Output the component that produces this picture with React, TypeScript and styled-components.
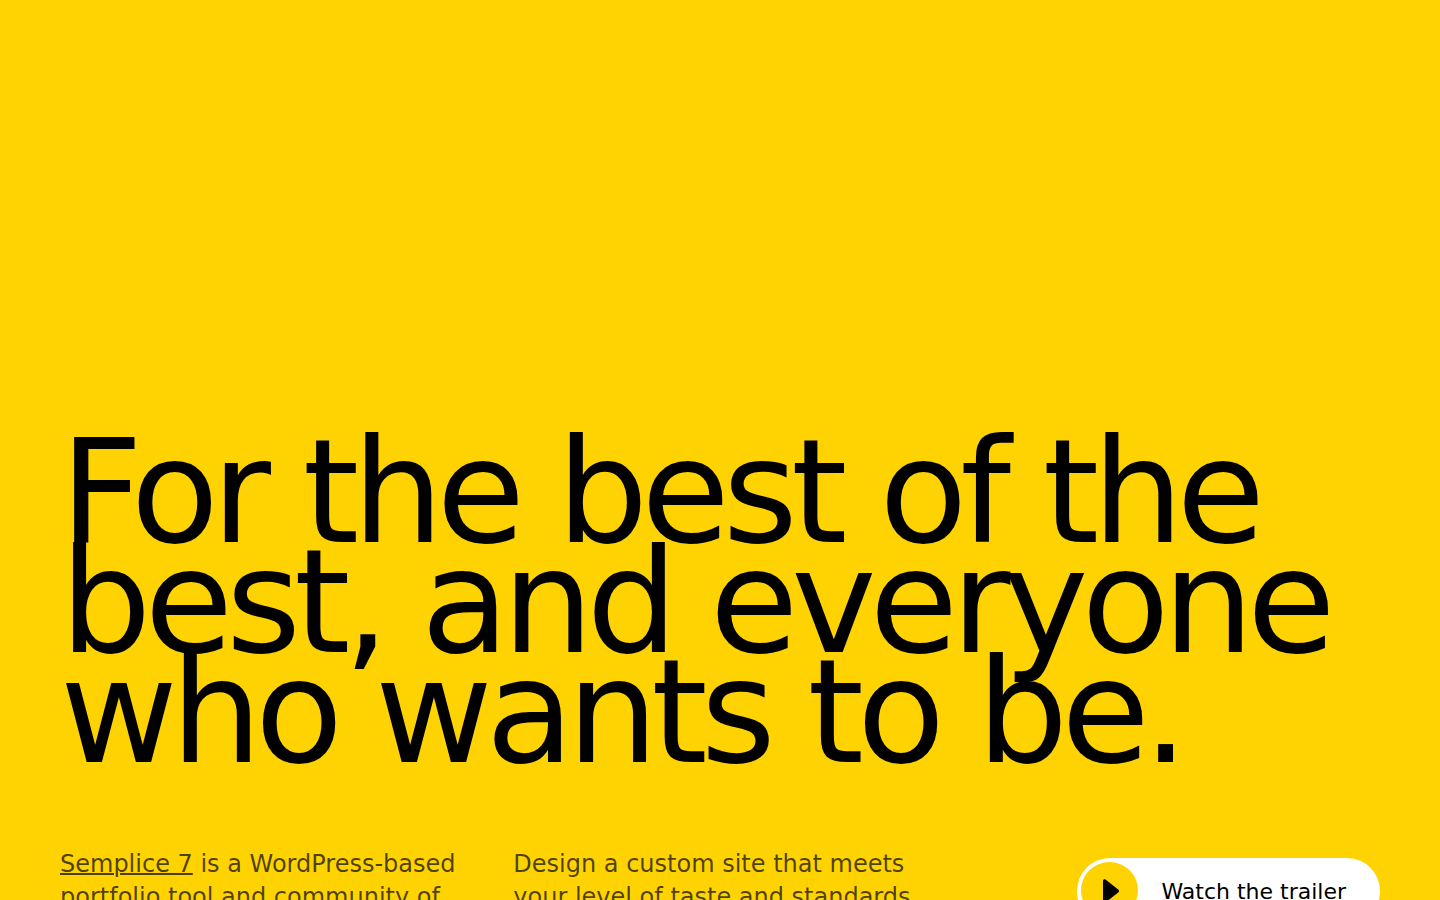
import React from 'react';
import styled, { createGlobalStyle } from 'styled-components';

const YELLOW = '#ffd302';

const GlobalStyle = createGlobalStyle`
  *, *::before, *::after { box-sizing: border-box; }
  body {
    margin: 0;
    background: ${YELLOW};
    color: #000;
    font-family: "DejaVu Sans", sans-serif;
  }
`;

const Hero = styled.main`
  min-height: 100vh;
  padding: 437px 60px 0;
`;

const Headline = styled.h1`
  margin: 0 0 81px;
  font-size: 144px;
  font-weight: 400;
  line-height: 110px;
  letter-spacing: -7px;
`;

const Columns = styled.div`
  display: grid;
  grid-template-columns: repeat(3, 1fr);
  gap: 40px;
`;

const Copy = styled.p`
  margin: 0;
  font-size: 24px;
  line-height: 33px;
  color: rgba(0, 0, 0, 0.7);
`;

const CopyLink = styled.a`
  color: inherit;
  text-decoration: underline;
  text-decoration-thickness: 2px;
`;

const Action = styled.div`
  display: flex;
  justify-content: flex-end;
  align-items: flex-start;
  padding-top: 10px;
`;

const TrailerButton = styled.button`
  display: flex;
  align-items: center;
  gap: 23px;
  height: 67px;
  padding: 4px 34px 4px 4px;
  border: 0;
  border-radius: 33px;
  background: #fff;
  color: #000;
  font-family: inherit;
  font-size: 22px;
  line-height: 30px;
  white-space: nowrap;
  cursor: pointer;
`;

const PlayBadge = styled.span`
  display: flex;
  align-items: center;
  justify-content: center;
  align-self: flex-start;
  flex: none;
  width: 57px;
  height: 57px;
  border-radius: 50%;
  background: ${YELLOW};
`;

const PlayIcon = () => (
  <svg width="20" height="24" viewBox="-2 0 20 24" aria-hidden="true">
    <path
      d="M1 2C1 .3 2.5 -.3 3.8 .7L16.2 10.4C17.4 11.3 17.4 12.7 16.2 13.6L3.8 23.3C2.5 24.3 1 23.7 1 22Z"
      fill="#000"
    />
  </svg>
);

export default function App() {
  return (
    <>
      <GlobalStyle />
      <Hero>
        <Headline>For the best of the best, and everyone who wants to be.</Headline>
        <Columns>
          <Copy>
            <CopyLink href="#semplice-7">Semplice 7</CopyLink> is a WordPress-based portfolio tool
            and community of
          </Copy>
          <Copy>Design a custom site that meets your level of taste and standards</Copy>
          <Action>
            <TrailerButton type="button">
              <PlayBadge>
                <PlayIcon />
              </PlayBadge>
              Watch the trailer
            </TrailerButton>
          </Action>
        </Columns>
      </Hero>
    </>
  );
}
